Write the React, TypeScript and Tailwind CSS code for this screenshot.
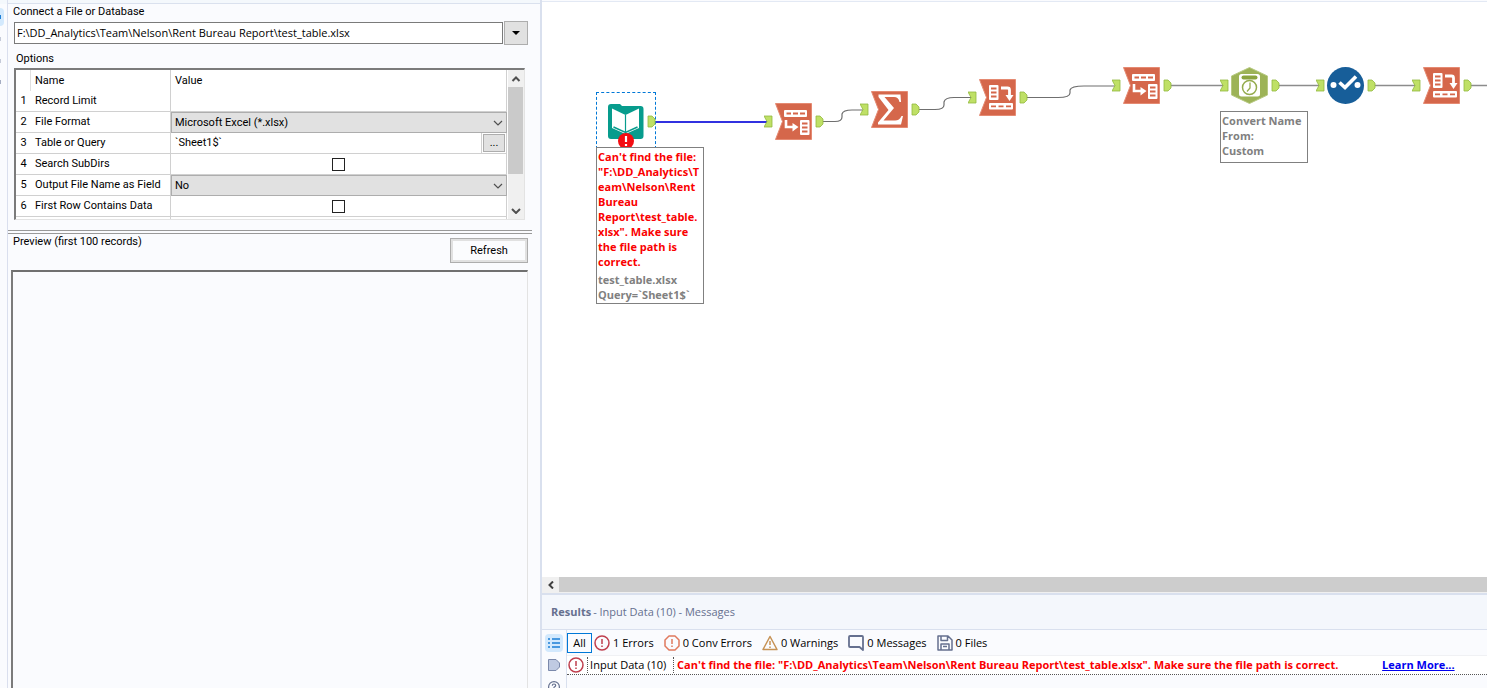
import React from 'react';

type ToolKind = 'rows' | 'sum' | 'cols' | 'convert' | 'select';

function InAnchor() {
  return <path d="M-11 13H-3V24H-11L-8 18.5Z" fill="#bfe066" stroke="#93b93f" strokeWidth="0.8" />;
}

function OutAnchor() {
  return <path d="M41 13H45L48 16V21L45 24H41Z" fill="#bfe066" stroke="#93b93f" strokeWidth="0.8" />;
}

function Flag() {
  return <path d="M0.5 0.5H36.5V36.5H0.5L7.5 18.5Z" fill="#d5674b" stroke="#e58a72" strokeWidth="1" />;
}

function RowsGlyph() {
  return (
    <g>
      <Flag />
      <rect x="9" y="7" width="23" height="7" rx="1" fill="#fff" />
      <path d="M11.500 10.500H16M18 10.500H23M25 10.500H30" stroke="#d5674b" strokeWidth="1.800" />
      <path d="M11 17V24H19" fill="none" stroke="#fff" strokeWidth="2.600" />
      <path d="M17.500 20L23.500 24L17.500 28.500Z" fill="#fff" />
      <rect x="25" y="17" width="9.500" height="15" rx="1" fill="#fff" />
      <path d="M27 20.500H32.500M27 24.500H32.500M27 28.500H32.500" stroke="#d5674b" strokeWidth="1.800" />
    </g>
  );
}

function ColsGlyph() {
  return (
    <g>
      <Flag />
      <rect x="10" y="6" width="9.500" height="15" rx="1" fill="#fff" />
      <path d="M12 9.500H17.500M12 13.500H17.500M12 17.500H17.500" stroke="#d5674b" strokeWidth="1.800" />
      <path d="M22 9H28.500Q30.500 9 30.500 11V17" fill="none" stroke="#fff" strokeWidth="2.800" />
      <path d="M26.500 16H34.500L30.500 22Z" fill="#fff" />
      <rect x="10" y="24" width="24" height="6.500" rx="1" fill="#fff" />
      <path d="M12 27.300H17M19.500 27.300H24.500M27 27.300H32" stroke="#d5674b" strokeWidth="1.800" />
    </g>
  );
}

function SumGlyph() {
  return (
    <g>
      <Flag />
      <path
        d="M7.500 3.500H29.500L30 11H28.500Q27.500 6 23 6H13.500L23 17L12.500 29.500H24Q28.500 29.500 30.500 25H32L30 33.500H7L7 31.500L17.500 19L7.500 6Z"
        fill="#fff"
      />
    </g>
  );
}

function ConvertGlyph() {
  return (
    <g>
      <path d="M18.500 0.500L36.500 9V28L18.500 36.500L0.500 28V9Z" fill="#9db357" stroke="#b7c982" />
      <rect x="8" y="7" width="21" height="22.500" rx="2.500" fill="#fff" />
      <rect x="10.500" y="8.500" width="16" height="4" rx="2" fill="#8ba43f" />
      <circle cx="18.500" cy="20.500" r="7" fill="#fff" stroke="#94ab4d" strokeWidth="1.500" />
      <path d="M19 15.500V21L16 24.500" fill="none" stroke="#94ab4d" strokeWidth="1.300" />
    </g>
  );
}

function SelectGlyph() {
  return (
    <g>
      <circle cx="18.500" cy="18.500" r="18.500" fill="#175e99" />
      <circle cx="6.500" cy="18" r="3" fill="#fff" />
      <circle cx="30.500" cy="18" r="3" fill="#fff" />
      <path d="M12.500 15.500L18 20.500L29 9.500" fill="none" stroke="#fff" strokeWidth="3.600" />
    </g>
  );
}

const glyphs: Record<ToolKind, () => React.JSX.Element> = {
  rows: RowsGlyph,
  sum: SumGlyph,
  cols: ColsGlyph,
  convert: ConvertGlyph,
  select: SelectGlyph,
};

const tools: { kind: ToolKind; name: string; place: string }[] = [
  { kind: 'rows', name: 'Transpose', place: 'left-[222px] top-[101px]' },
  { kind: 'sum', name: 'Summarize', place: 'left-[318px] top-[89px]' },
  { kind: 'cols', name: 'Cross Tab', place: 'left-[426px] top-[77px]' },
  { kind: 'rows', name: 'Transpose', place: 'left-[570px] top-[65px]' },
  { kind: 'convert', name: 'DateTime', place: 'left-[678px] top-[65px]' },
  { kind: 'select', name: 'Select', place: 'left-[774px] top-[65px]' },
  { kind: 'cols', name: 'Cross Tab', place: 'left-[870px] top-[65px]' },
];

function Wires() {
  return (
    <svg className="absolute top-0 left-0 overflow-visible" width="945" height="200" fill="none" aria-hidden="true">
      <g stroke="#6f6f6f" strokeWidth="1.200">
        <path d="M280 119.500H293Q300 119.500 300 115V112Q301 108 310 108H325" />
        <path d="M376 107.500H393Q402 107.500 402 103V100Q403 95.500 412 95.500H433" />
        <path d="M484 95.500H516Q528 95.500 528 91V88Q529 84 542 84H577" />
      </g>
      <g stroke="#8c8c8c" strokeWidth="1.400">
        <path d="M628 83.500H685M736 83.500H781M828 83.500H877M928 83.500H4000" />
      </g>
      <path d="M113 120H226" stroke="#3131e0" strokeWidth="2" />
    </svg>
  );
}

function InputTool() {
  return (
    <div className="absolute top-[90px] left-[54px] h-[57px] w-[60px] border border-dashed border-[#0078d7]">
      <svg className="overflow-visible" width="58" height="55" viewBox="-10 -10 58 55" role="img" aria-label="Input Data">
        <path d="M4 1H13L15 3H33.500Q36.500 3 36.500 6V33Q36.500 36 33.500 36H4Q1 36 1 33V4Q1 1 4 1Z" fill="#079c8d" />
        <path d="M5 5.500L18.500 12L32 5.500V25L18.500 31L5 25Z" fill="#fff" />
        <path d="M18.500 12V31" stroke="#079c8d" strokeWidth="1.200" />
        <path d="M6.500 24L18.500 29.500L30.500 24" fill="none" stroke="#079c8d" strokeWidth="1.500" />
        <OutAnchor />
        <circle cx="19" cy="38" r="8" fill="#f30d12" />
        <path d="M19 33V39M19 41V43" stroke="#fff" strokeWidth="2.200" />
      </svg>
    </div>
  );
}

function Canvas() {
  return (
    <section aria-label="Workflow" className="relative min-h-[320px] flex-1 overflow-hidden bg-white font-['Open_Sans','Noto_Sans',sans-serif] text-[11px] leading-[15px] font-bold">
      <Wires />
      <InputTool />
      {tools.map((tool) => {
        const Glyph = glyphs[tool.kind];
        return (
          <svg key={tool.place} className={`absolute ${tool.place}`} width="62" height="38" viewBox="-11 0 62 38" role="img" aria-label={tool.name}>
            <InAnchor />
            <Glyph />
            <OutAnchor />
          </svg>
        );
      })}
      <div className="absolute top-[145px] left-[54px] w-[108px] border border-[#808080] bg-white px-px pt-px pb-px">
        <p className="text-[#fa0000]">
          Can't find the file:<br />"F:\DD_Analytics\T<br />eam\Nelson\Rent<br />Bureau<br />Report\test_table.<br />xlsx". Make sure<br />the file path is<br />correct.
        </p>
        <p className="pt-[3px] text-[#808080]">
          test_table.xlsx<br />Query=`Sheet1$`
        </p>
      </div>
      <div className="absolute top-[109px] left-[678px] w-[88px] border border-[#808080] bg-white px-px pt-px pb-1 text-[#808080]">
        Convert Name<br />From:<br />Custom
      </div>
    </section>
  );
}

function Chevron({ up, heavy, className }: { up?: boolean; heavy?: boolean; className?: string }) {
  return (
    <svg className={className} width="10" height="6" viewBox="0 0 10 6" fill="none" aria-hidden="true">
      <path d={up ? 'M1.500 5L5 1.500L8.500 5' : 'M1 1L5 5L9 1'} stroke="#505050" strokeWidth={heavy ? 2 : 1.200} />
    </svg>
  );
}

function OptionSelect({ id, value }: { id: string; value: string }) {
  return (
    <div className="relative h-[21px]">
      <select id={id} className="block h-full w-full appearance-none border border-[#adadad] bg-[#e1e1e1] pl-[3px]">
        <option>{value}</option>
      </select>
      <Chevron className="pointer-events-none absolute top-2 right-1" />
    </div>
  );
}

function OptionCheck({ id }: { id: string }) {
  return <input id={id} type="checkbox" className="mx-auto block size-[13px] appearance-none border border-[#222] bg-white checked:bg-[#222]" />;
}

const options: { label: string; boxed?: boolean; field: (id: string) => React.JSX.Element }[] = [
  { label: 'Record Limit', field: (id) => <input id={id} className="block h-5 w-full px-1 outline-none" /> },
  { label: 'File Format', boxed: true, field: (id) => <OptionSelect id={id} value="Microsoft Excel (*.xlsx)" /> },
  {
    label: 'Table or Query',
    field: (id) => (
      <div className="flex h-5">
        <input id={id} defaultValue="`Sheet1$`" className="min-w-0 flex-1 border-r border-[#d0d0d0] px-1 outline-none" />
        <button type="button" aria-label="Choose table or query" className="m-px h-[18px] w-[22px] border border-[#adadad] bg-[#e1e1e1] leading-3">
          ...
        </button>
      </div>
    ),
  },
  { label: 'Search SubDirs', field: (id) => <OptionCheck id={id} /> },
  { label: 'Output File Name as Field', boxed: true, field: (id) => <OptionSelect id={id} value="No" /> },
  { label: 'First Row Contains Data', field: (id) => <OptionCheck id={id} /> },
];

function OptionsTable() {
  return (
    <div className="mr-[15px] ml-1.5 flex h-[152px] overflow-hidden border-t-2 border-r border-b border-l-2 border-t-[#7b7b7b] border-r-[#e3e3e3] border-b-[#e3e3e3] border-l-[#7b7b7b] bg-white">
      <div className="min-w-0 flex-1 overflow-hidden">
        <table className="w-full table-fixed border-separate border-spacing-0">
          <colgroup>
            <col className="w-[15px]" />
            <col className="w-[140px]" />
            <col />
          </colgroup>
          <thead>
            <tr className="h-[21px] text-left">
              <th className="border-r border-[#e0e0e0] p-0"></th>
              <th className="border-r border-[#d0d0d0] p-0 pl-1 font-normal">Name</th>
              <th className="border-r border-[#d0d0d0] p-0 pl-1 font-normal">Value</th>
            </tr>
          </thead>
          <tbody>
            {options.map((option, i) => (
              <tr key={option.label} className="h-[21px]">
                <td className="border-b border-[#d0d0d0] p-0 text-center">{i + 1}</td>
                <td className="border-r border-b border-[#d0d0d0] p-0 pl-1 whitespace-nowrap">
                  <label htmlFor={`option-${i}`}>{option.label}</label>
                </td>
                <td className={option.boxed ? 'p-0' : 'border-r border-b border-[#d0d0d0] p-0'}>{option.field(`option-${i}`)}</td>
              </tr>
            ))}
            <tr className="h-[21px]">
              <td className="p-0"></td>
              <td className="border-r border-[#d0d0d0] p-0"></td>
              <td className="border-r border-[#d0d0d0] p-0"></td>
            </tr>
          </tbody>
        </table>
      </div>
      <div className="ml-px flex w-4 flex-col bg-[#f0f0f0]">
        <button type="button" aria-label="Scroll up" className="grid h-[17px] place-items-center">
          <Chevron up heavy />
        </button>
        <div className="h-[87px] w-[15px] bg-[#cacaca]" />
        <button type="button" aria-label="Scroll down" className="mt-auto grid h-[17px] place-items-center">
          <Chevron heavy />
        </button>
      </div>
    </div>
  );
}

function ConfigPanel() {
  return (
    <section aria-label="Configuration" className="flex min-w-0 flex-1 flex-col border-l border-[#dadfee] font-[Roboto,'Liberation_Sans',sans-serif] text-[11px] leading-4 text-black">
      <div className="h-1 shrink-0 border-b border-[#dae1ee] bg-[#f4f8fc]" />
      <label htmlFor="source" className="pl-[5px] leading-[15px]">
        Connect a File or Database
      </label>
      <div className="mt-0.5 mr-3 ml-1.5 flex items-center gap-px">
        <input
          id="source"
          defaultValue="F:\DD_Analytics\Team\Nelson\Rent Bureau Report\test_table.xlsx"
          className="h-[22px] min-w-0 flex-1 border border-[#7a7a7a] bg-white px-0.5 pb-0.5 font-['Open_Sans','Noto_Sans',sans-serif] text-[11px] outline-none"
        />
        <button type="button" aria-label="Open source list" className="grid h-6 w-6 place-items-center border border-[#adadad] bg-[#e1e1e1]">
          <svg width="8" height="4" aria-hidden="true">
            <path d="M0 0H8L4 4Z" fill="#000" />
          </svg>
        </button>
      </div>
      <h2 className="mt-1.5 mb-px pl-2">Options</h2>
      <OptionsTable />
      <div className="mt-[10px] mr-2 h-1 shrink-0 border-y border-[#999]" />
      <div className="mr-3 flex items-start justify-between pl-[5px]">
        <h2 className="leading-[15px]">Preview (first 100 records)</h2>
        <button type="button" className="mt-1 h-[25px] w-[78px] border border-[#adadad] bg-[#fbfcfe] outline-2 -outline-offset-3 outline-[#e1e1e1]">
          Refresh
        </button>
      </div>
      <div className="mt-[7px] mr-3 ml-[3px] flex-1 border-t-2 border-r border-l-2 border-t-[#707070] border-r-[#e3e3e3] border-l-[#7b7b7b]" />
    </section>
  );
}

function AlertCircle({ color, octagon }: { color: string; octagon?: boolean }) {
  return (
    <svg width="16" height="16" viewBox="0 0 16 16" fill="none" stroke={color} strokeWidth="1.500" aria-hidden="true">
      {octagon ? <path d="M5 1H11L15 5V11L11 15H5L1 11V5Z" strokeLinejoin="round" /> : <circle cx="8" cy="8" r="7" />}
      <path d="M8 4V9M8 10.500V12" />
    </svg>
  );
}

function WarningIcon() {
  return (
    <svg width="16" height="16" viewBox="0 0 16 16" fill="none" stroke="#c69255" strokeWidth="1.500" strokeLinejoin="round" aria-hidden="true">
      <path d="M8 1.500L15 14.500H1Z" />
      <path d="M8 6V10M8 11.500V13" />
    </svg>
  );
}

function MessageIcon() {
  return (
    <svg width="16" height="16" viewBox="0 0 16 16" fill="none" stroke="#65708f" strokeWidth="1.800" strokeLinejoin="round" aria-hidden="true">
      <path d="M2 1H14Q15 1 15 2V15L11.500 12H2Q1 12 1 11V2Q1 1 2 1Z" />
    </svg>
  );
}

function SaveIcon() {
  return (
    <svg width="16" height="16" viewBox="0 0 16 16" fill="none" stroke="#65708f" strokeWidth="1.500" strokeLinejoin="round" aria-hidden="true">
      <path d="M1 1H11L15 5V15H1ZM4 1V5.500H10.500V1M4 15V9H12V15M6 11.500H10" />
    </svg>
  );
}

const filters = [
  { label: '1 Errors', icon: <AlertCircle color="#bf3f4e" /> },
  { label: '0 Conv Errors', icon: <AlertCircle color="#e07a5e" octagon /> },
  { label: '0 Warnings', icon: <WarningIcon /> },
  { label: '0 Messages', icon: <MessageIcon /> },
  { label: '0 Files', icon: <SaveIcon /> },
];

function Results() {
  return (
    <section aria-label="Results" className="font-['Open_Sans','Noto_Sans',sans-serif] text-[11px] leading-4 text-black">
      <header className="flex h-[37px] items-center gap-0.5 border-t-2 border-b border-[#d9e0ee] bg-[#f4f7fc] pl-[9px] text-[#66708f]">
        <h2 className="font-bold">Results</h2>
        <span>- Input Data (10) - Messages</span>
      </header>
      <div className="flex h-[58px] overflow-hidden">
        <nav aria-label="Result views" className="flex w-[25px] shrink-0 flex-col items-center gap-1 border-r border-[#d9e0ee] pt-1">
          <button type="button" aria-label="Messages" className="grid h-[18px] w-[18px] shrink-0 place-items-center rounded-sm bg-[#d3e9fd]">
            <svg width="12" height="10" stroke="#1d7fd6" strokeWidth="1.300" aria-hidden="true">
              <path d="M0 1H2M4 1H12M0 5H2M4 5H12M0 9H2M4 9H12" />
            </svg>
          </button>
          <button type="button" aria-label="Anchor data" className="grid h-[18px] w-[18px] shrink-0 place-items-center">
            <svg width="12" height="12" aria-hidden="true">
              <path d="M0.500 0.500H8L11.500 4V8L8 11.500H0.500Z" fill="#bfcae2" stroke="#7b89ab" />
            </svg>
          </button>
          <button type="button" aria-label="Help" className="grid h-[18px] w-[18px] shrink-0 place-items-center">
            <svg width="12" height="12" viewBox="0 0 12 12" fill="none" stroke="#65708f" strokeWidth="1.200" aria-hidden="true">
              <circle cx="6" cy="6" r="5.400" />
              <path d="M4.300 4.800Q4.300 3 6 3Q7.700 3 7.700 4.600Q7.700 5.500 6 6.300V7.300M6 8.300V9.500" />
            </svg>
          </button>
        </nav>
        <div className="min-w-0 flex-1">
          <div className="flex h-[26px] items-center gap-[10px] border-b border-[#f0f1f4] whitespace-nowrap">
            <div className="flex items-center gap-0.5">
              <button type="button" className="h-5 w-[25px] border border-[#0078d7]">
                All
              </button>
              <button type="button" className="flex items-center gap-[3px]">
                {filters[0].icon}
                {filters[0].label}
              </button>
            </div>
            {filters.slice(1).map((filter) => (
              <button key={filter.label} type="button" className="flex items-center gap-[3px]">
                {filter.icon}
                {filter.label}
              </button>
            ))}
          </div>
          <div className="flex h-[19px] items-center border-b border-dotted border-[#555] bg-white whitespace-nowrap">
            <span className="flex w-5 justify-start pl-px">
              <AlertCircle color="#bf3f4e" />
            </span>
            <span className="w-[87px] border-x border-dotted border-[#555] pl-0.5">Input Data (10)</span>
            <strong className="min-w-[692px] pl-[3px] text-[#fa0000]">
              Can't find the file: "F:\DD_Analytics\Team\Nelson\Rent Bureau Report\test_table.xlsx". Make sure the file path is correct.
            </strong>
            <a href="#learn-more" className="ml-4 font-bold text-[#0000ee] underline">
              Learn More...
            </a>
          </div>
        </div>
      </div>
    </section>
  );
}

export default function App() {
  return (
    <main className="flex min-h-screen bg-[#fafbfe]">
      <div className="flex w-[36.32%] min-w-[400px] shrink-0">
        <div className="w-[7px] shrink-0 overflow-hidden border-t-4 border-[#f4f8fc] pt-1">
          <div className="flex h-[18px] w-1 items-center rounded-r-sm bg-[#d3e9fd]">
            <span className="h-1 w-px bg-[#1d7fd6]" />
          </div>
          <div className="mt-[11px] h-1 w-px bg-[#c5cad8]" />
          <div className="mt-[18px] h-1 w-px bg-[#c5cad8]" />
          <div className="mt-[17px] h-1 w-px bg-[#a5adc2]" />
        </div>
        <ConfigPanel />
      </div>
      <div className="flex min-w-0 flex-1 flex-col border-l-2 border-[#d9e0ee]">
        <div className="h-0.5 shrink-0 border-b border-[#e3e9f4]" />
        <Canvas />
        <div className="flex h-4 shrink-0 bg-[#f0f0f0] pb-px">
          <button type="button" aria-label="Scroll left" className="grid w-[17px] place-items-center">
            <svg width="6" height="8" fill="none" stroke="#404040" strokeWidth="2" aria-hidden="true">
              <path d="M5 0.500L1.500 4L5 7.500" />
            </svg>
          </button>
          <div className="flex-1 bg-[#cdcdcd]" />
        </div>
        <Results />
      </div>
    </main>
  );
}
